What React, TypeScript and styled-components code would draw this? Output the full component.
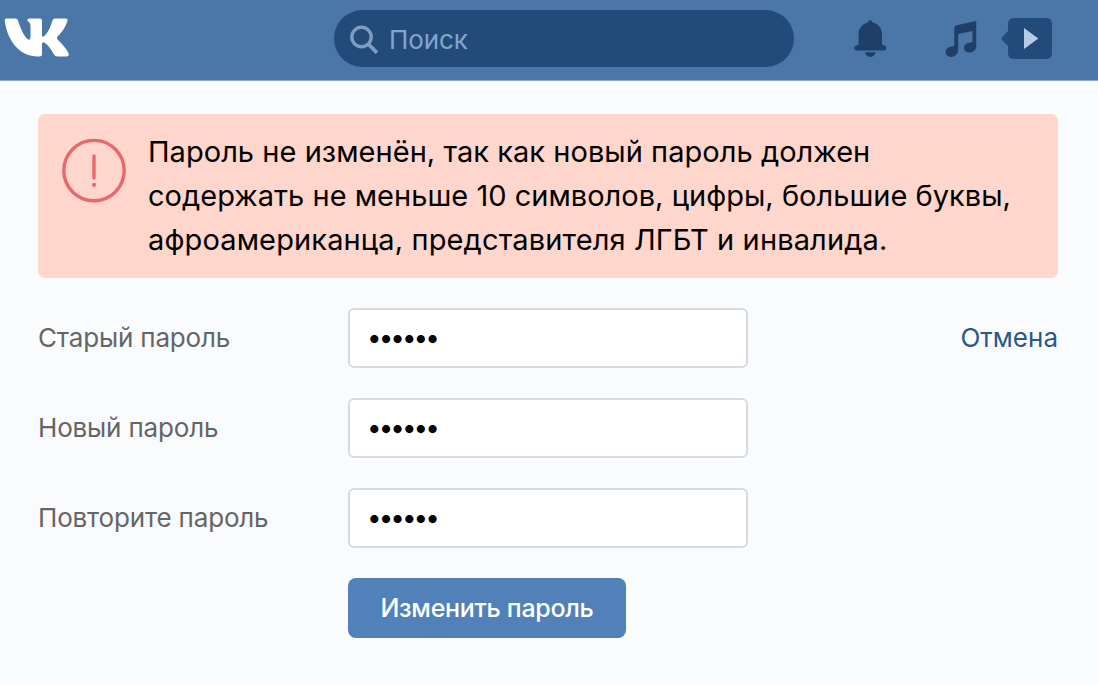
import styled, { createGlobalStyle } from "styled-components";

const GlobalStyle = createGlobalStyle`
  *, *::before, *::after {
    box-sizing: border-box;
  }

  body {
    margin: 0;
    background: #fafbfd;
    font-family: Inter, "Liberation Sans", sans-serif;
    font-size: 26px;
  }
`;

const Page = styled.div`
  min-height: 100vh;
  overflow: hidden;
`;

const Header = styled.header`
  display: flex;
  align-items: flex-start;
  height: 81px;
  padding-top: 10px;
  background: #4a76a8;
  border-bottom: 1px solid #8da8c6;
`;

const Logo = styled.svg`
  width: 66px;
  height: 40px;
  margin: 7px 0 0 4px;
`;

const Search = styled.label`
  display: flex;
  align-items: center;
  width: 460px;
  height: 57px;
  margin-left: 264px;
  padding: 0 16px 0 15px;
  border-radius: 29px;
  background: #224b7a;
`;

const SearchIcon = styled.svg`
  width: 30px;
  height: 30px;
  flex: none;
`;

const SearchInput = styled.input`
  flex: 1;
  min-width: 0;
  margin-left: 10px;
  padding: 2px 0 0;
  border: none;
  outline: none;
  background: none;
  color: #fff;
  font: inherit;
  letter-spacing: -0.1px;

  &::placeholder {
    color: #84a5cb;
    opacity: 1;
  }
`;

const HeaderIcons = styled.nav`
  display: flex;
  align-items: flex-start;
  padding: 8px 0 0 60px;
`;

const BellIcon = styled.svg`
  width: 34px;
  height: 40px;
`;

const MusicIcon = styled.svg`
  width: 32px;
  height: 40px;
  margin-left: 57px;
`;

const VideoIcon = styled.svg`
  width: 52px;
  height: 42px;
  margin-left: 24px;
`;

const Main = styled.main`
  padding: 33px 40px 0 38px;
`;

const Alert = styled.div`
  display: flex;
  align-items: flex-start;
  height: 164px;
  padding: 16px 0 0 24px;
  border-radius: 7px;
  background: #ffd6cc;
`;

const AlertIcon = styled.svg`
  width: 64px;
  height: 65px;
  flex: none;
  margin-top: 8px;
`;

const AlertText = styled.p`
  margin: 0 0 0 22px;
  color: #000;
  font-size: 29px;
  line-height: 44px;
  white-space: nowrap;
`;

const AlertLine = styled.span<{ $spacing: number }>`
  display: block;
  letter-spacing: ${({ $spacing }) => $spacing}px;
`;

const Form = styled.form`
  display: flex;
  flex-direction: column;
  gap: 30px;
  margin-top: 30px;
`;

const Row = styled.div`
  display: flex;
  align-items: center;
  height: 60px;
`;

const Label = styled.label`
  width: 310px;
  flex: none;
  padding-bottom: 2px;
  color: #656565;
  letter-spacing: -0.17px;
`;

const PasswordInput = styled.input`
  width: 400px;
  height: 60px;
  padding: 0 17px 2px;
  border: 2px solid #d5dbe1;
  border-radius: 6px;
  outline: none;
  background: #fff;
  color: #000;
  font: inherit;
  letter-spacing: -3px;
`;

const CancelLink = styled.a`
  margin-left: auto;
  padding-bottom: 2px;
  color: #2a5885;
  text-decoration: none;
`;

const SubmitButton = styled.button`
  width: 278px;
  height: 60px;
  margin-left: 310px;
  padding: 0;
  border: none;
  border-radius: 8px;
  background: #5181b8;
  color: #fff;
  font: inherit;
  font-size: 25px;
  font-weight: 500;
  letter-spacing: -0.3px;
  white-space: nowrap;
  cursor: pointer;
`;

const fields = [
  { id: "old", label: "Старый пароль", cancel: true },
  { id: "new", label: "Новый пароль" },
  { id: "repeat", label: "Повторите пароль" },
];

function App() {
  return (
    <>
      <GlobalStyle />
      <Page>
        <Header>
          <Logo viewBox="4 17 66 40" fill="#fff">
            <path d="M6.5 18.5H15.5Q17.3 18.5 18 20.5C20.5 28.5 24 36 27.5 39Q30.5 41 30.5 37V25.5C30.3 21.8 27.3 21.7 27.3 20Q27.3 18.5 29 18.5H40.3Q42 18.5 42 20.7V35Q42 38 44.5 36C48 32.5 50.5 27 52.4 20.7Q53.1 18.5 55 18.5H65.5Q68.3 18.5 67.3 21.2C65.3 27.5 61 33.5 57.5 36.5Q56.2 38 57.5 39.5C61.5 43.3 66.2 48.3 68.5 53.3Q69.7 56.5 66.5 56.5H57.5Q55 56.5 53.7 54C51 49 47.5 44.3 44 42.5Q42 41.8 42 44V54.5Q42 56.5 39.5 56.5H37.5C21 56.5 7.5 42.5 4.7 20.5Q4.5 18.5 6.5 18.5Z" />
          </Logo>
          <Search>
            <SearchIcon
              viewBox="0 0 30 30"
              fill="none"
              stroke="#7d9dc3"
              strokeWidth="3.4"
            >
              <circle cx="12.5" cy="13" r="9.7" />
              <path d="M19.3 20L28 28.8" strokeWidth="3.8" />
            </SearchIcon>
            <SearchInput placeholder="Поиск" />
          </Search>
          <HeaderIcons>
            <BellIcon viewBox="854 18 34 40" fill="#1f3f69">
              <path d="M870.3 20.2C871.6 20.2 872.3 21.2 872.6 22.6C878.5 24 882 28.5 882 34V43.8Q882 45 883.2 45.2C887.7 45.7 886.8 50.5 883.8 50.5H856.8C853.8 50.5 852.9 45.7 857.4 45.2Q858.6 45 858.6 43.8V34C858.6 28.5 862.1 24 868 22.6C868.3 21.2 869 20.2 870.3 20.2Z" />
              <path d="M865 52.3H875.6C875 55.2 873 56.9 870.3 56.9S865.6 55.2 865 52.3Z" />
            </BellIcon>
            <MusicIcon viewBox="945 18 32 40" fill="#1f3f69">
              <path d="M976.2 21V46C976.2 50 973 52.5 969.5 52.5C966 52.5 964 50.5 964 47.8C964 44.5 967 42.7 970 42.7Q972.5 42.7 972.5 40.5V31L958.2 34V49.5C958.2 54 955 56.9 951 56.9C947.7 56.9 945.7 54.8 945.7 52C945.7 48.7 948.5 46.7 951.7 46.7Q954.3 46.7 954.3 44.3V28Q954.3 25.7 956.6 25.2Z" />
            </MusicIcon>
            <VideoIcon viewBox="1001 18 52 42">
              <path
                fill="#224b7a"
                d="M1014 18H1046Q1052 18 1052 24V53Q1052 59 1046 59H1014Q1008 59 1008 53V46L1002 40Q1001 38.5 1002 37L1008 31V24Q1008 18 1014 18Z"
              />
              <path fill="#b7cbe4" d="M1024 28L1038.3 38.5L1024 49Z" />
            </VideoIcon>
          </HeaderIcons>
        </Header>

        <Main>
          <Alert>
            <AlertIcon viewBox="0 0 64 65" fill="none" stroke="#e8686f">
              <circle cx="32" cy="32.6" r="30.2" strokeWidth="3.4" />
              <path d="M32 18V40" strokeWidth="3.4" strokeLinecap="round" />
              <circle cx="32" cy="46.8" r="2.1" fill="#e8686f" stroke="none" />
            </AlertIcon>
            <AlertText>
              <AlertLine $spacing={0.04}>
                Пароль не изменён, так как новый пароль должен
              </AlertLine>
              <AlertLine $spacing={0.02}>
                содержать не меньше 10 символов, цифры, большие буквы,
              </AlertLine>
              <AlertLine $spacing={0.13}>
                афроамериканца, представителя ЛГБТ и инвалида.
              </AlertLine>
            </AlertText>
          </Alert>

          <Form>
            {fields.map((field) => (
              <Row key={field.id}>
                <Label htmlFor={field.id}>{field.label}</Label>
                <PasswordInput
                  id={field.id}
                  type="password"
                  defaultValue="qwerty"
                />
                {field.cancel && <CancelLink href="#">Отмена</CancelLink>}
              </Row>
            ))}
            <SubmitButton type="button">Изменить пароль</SubmitButton>
          </Form>
        </Main>
      </Page>
    </>
  );
}

export default App;
